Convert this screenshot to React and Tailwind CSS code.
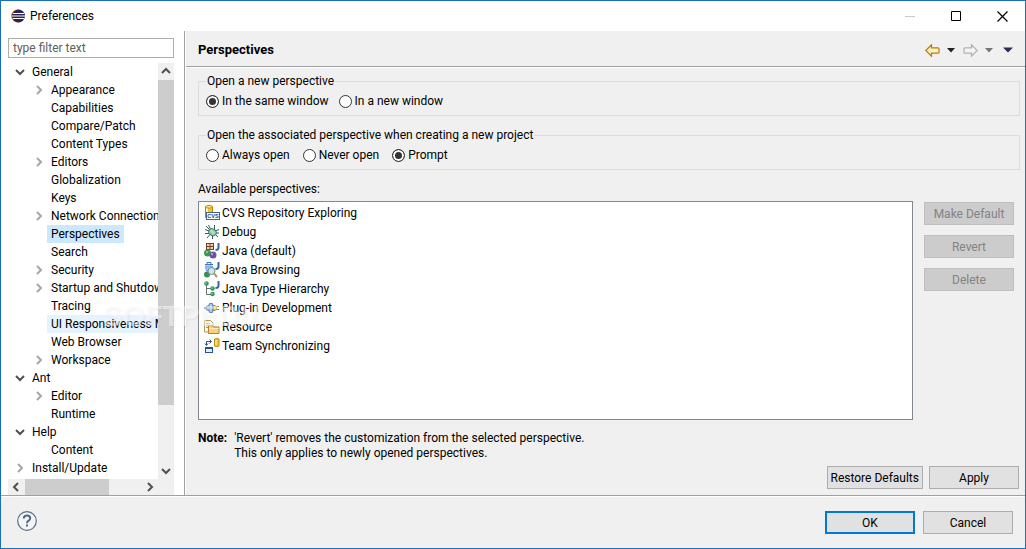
import { useState } from "react";

const tree = [
  { label: "General", level: 0, state: "open" },
  { label: "Appearance", level: 1, state: "closed" },
  { label: "Capabilities", level: 1 },
  { label: "Compare/Patch", level: 1 },
  { label: "Content Types", level: 1 },
  { label: "Editors", level: 1, state: "closed" },
  { label: "Globalization", level: 1 },
  { label: "Keys", level: 1 },
  { label: "Network Connections", level: 1, state: "closed" },
  { label: "Perspectives", level: 1 },
  { label: "Search", level: 1 },
  { label: "Security", level: 1, state: "closed" },
  { label: "Startup and Shutdown", level: 1, state: "closed" },
  { label: "Tracing", level: 1 },
  { label: "UI Responsiveness Monitoring", level: 1, hot: true },
  { label: "Web Browser", level: 1 },
  { label: "Workspace", level: 1, state: "closed" },
  { label: "Ant", level: 0, state: "open" },
  { label: "Editor", level: 1, state: "closed" },
  { label: "Runtime", level: 1 },
  { label: "Help", level: 0, state: "open" },
  { label: "Content", level: 1 },
  { label: "Install/Update", level: 0, state: "closed" },
];

function Icon({ children }) {
  return (
    <svg className="h-4 w-4 shrink-0" viewBox="0 0 16 16" fill="none" aria-hidden="true">
      {children}
    </svg>
  );
}

function JavaJ() {
  return <path d="M14.5 0v4.5q0 2.5-3 2.5" stroke="#35699f" strokeWidth="2" />;
}

const perspectives = [
  {
    name: "CVS Repository Exploring",
    icon: (
      <Icon>
        <path d="M1.5 1.5v11h7v-11z" fill="#f4c53c" stroke="#b8860b" />
        <path d="M3 3v9" stroke="#fff3b0" strokeWidth="2" />
        <ellipse cx="5" cy="1.8" rx="3.5" ry="1.3" fill="#ffe88a" stroke="#c08a10" />
        <rect x="2.5" y="7.5" width="13" height="7" fill="#fff" stroke="#4a628c" />
        <text x="3.2" y="13.2" fontSize="5.6" fontWeight="bold" fontFamily="Liberation Sans, sans-serif" fill="#1c3f86">CVS</text>
      </Icon>
    ),
  },
  {
    name: "Debug",
    icon: (
      <Icon>
        <path d="M4.5 1l2 4M10.5 1v4M1 5.5l4 1.5M1 9.5h4M3 14l3-3.5M8.5 15v-4M14 13l-3-3M11 7l4-1.5M11 9h4M2 2l4 4" stroke="#2f6060" />
        <ellipse cx="8.5" cy="8.2" rx="4" ry="3.3" transform="rotate(35 8.5 8.2)" fill="#9ccfae" stroke="#33705f" />
        <path d="M7 6.5l3 3" stroke="#def3df" />
      </Icon>
    ),
  },
  {
    name: "Java (default)",
    icon: (
      <Icon>
        <rect x="2.5" y=".5" width="7" height="6" fill="#efd2a5" stroke="#74402a" />
        <path d="M6 .5v6M2.5 3.5h7" stroke="#74402a" />
        <circle cx="3.5" cy="10" r="3.5" fill="#3f9554" />
        <circle cx="3" cy="9" r="1" fill="#9ad5a5" />
        <circle cx="9" cy="12" r="3.5" fill="#6655a0" />
        <circle cx="8" cy="11" r="1.2" fill="#aaa0d0" />
        <JavaJ />
      </Icon>
    ),
  },
  {
    name: "Java Browsing",
    icon: (
      <Icon>
        <path d="M1 2.5h8M3 2V.5h4V2" stroke="#3c74bd" />
        <path d="M1.5 4l1 5h5l1-5z" fill="#9bc2f0" stroke="#6f9fdc" />
        <circle cx="3" cy="12.5" r="3" fill="#398e50" />
        <circle cx="7.5" cy="9" r="3.5" fill="#cbe7df" stroke="#718995" />
        <path d="M10 11.5l3 3.5" stroke="#b6985b" strokeWidth="2" />
        <JavaJ />
      </Icon>
    ),
  },
  {
    name: "Java Type Hierarchy",
    icon: (
      <Icon>
        <path d="M2.5 3v10.5h5M2.5 7.5h5" stroke="#66716d" />
        <circle cx="2.5" cy="2.5" r="2.3" fill="#379660" />
        <circle cx="8.5" cy="7.5" r="2.3" fill="#379660" />
        <circle cx="8.5" cy="13" r="2.3" fill="#379660" />
        <circle cx="2" cy="2" r=".8" fill="#9ad9b1" />
        <circle cx="8" cy="7" r=".8" fill="#9ad9b1" />
        <circle cx="8" cy="12.5" r=".8" fill="#9ad9b1" />
        <JavaJ />
      </Icon>
    ),
  },
  {
    name: "Plug-in Development",
    icon: (
      <Icon>
        <path d="M0 8h3" stroke="#4d78b4" strokeWidth="2" />
        <path d="M2.5 6h2l1-2.500h3v9h-3l-1-2.500h-2z" fill="#8eb1df" stroke="#6189bf" />
        <path d="M7 4v8" stroke="#d0e0f5" />
        <path d="M9.5 5l3 1.5v3l-3 1.5z" fill="#f5cf66" stroke="#b98b2e" />
        <path d="M12 6.5h3M12 9.5h3" stroke="#ad7d2b" />
      </Icon>
    ),
  },
  {
    name: "Resource",
    icon: (
      <Icon>
        <path d="M.5 1.5h6l2.5 2.5v9H.5z" fill="#fdf8e7" stroke="#b69653" />
        <path d="M2 4.5h4M2 6.5h4M2 8.5h3" stroke="#789bc9" />
        <path d="M4.5 14.5v-8h4l1 1.5h5.5v6.5z" fill="#f8d27b" stroke="#b8812d" />
        <path d="M5.5 9.5h9" stroke="#fff0bd" />
      </Icon>
    ),
  },
  {
    name: "Team Synchronizing",
    icon: (
      <Icon>
        <path d="M2.5 7V3.5H7M1 5.5l1.5 2L4 5.5M5.5 1.5l2 2-2 2" stroke="#28518e" />
        <rect x="1.5" y="9.5" width="7" height="5" fill="#dff0ff" stroke="#28518e" />
        <path d="M1 10h8" stroke="#28518e" strokeWidth="2" />
        <path d="M10.5 1q2.25-1 4.5 0v7q-2.25 1-4.5 0z" fill="#f6c832" stroke="#b98a11" />
        <path d="M12 2v5" stroke="#fff2a4" />
      </Icon>
    ),
  },
];

function Chevron({ dir, className }) {
  const paths = {
    down: "M1 3l4 4 4-4",
    up: "M1 7l4-4 4 4",
    right: "M3 1l4 4-4 4",
    left: "M7 1L3 5l4 4",
  };
  return (
    <svg className={`h-[10px] w-[10px] shrink-0 ${className}`} viewBox="0 0 10 10" fill="none" aria-hidden="true">
      <path d={paths[dir]} stroke="currentColor" strokeWidth="2" />
    </svg>
  );
}

function ScrollButton({ dir }) {
  return (
    <button type="button" aria-label={`Scroll ${dir}`} className="flex h-4 w-4 shrink-0 items-center justify-center text-[#505050]">
      <Chevron dir={dir} className="" />
    </button>
  );
}

function Button({ children, primary, disabled }) {
  let look = "border border-[#adadad] bg-[#e1e1e1]";
  if (primary) look = "border-2 border-[#0078d7] bg-[#e1e1e1]";
  if (disabled) look = "border border-[#bfbfbf] bg-[#cccccc] text-[#838383]";
  return (
    <button type="button" disabled={disabled} className={`flex h-[23px] min-w-[90px] items-center justify-center whitespace-nowrap px-[3px] ${look}`}>
      {children}
    </button>
  );
}

function RadioGroup({ title, name, options, initial, gap }) {
  const [value, setValue] = useState(initial);
  return (
    <fieldset className="mr-[5px] border border-[#dcdcdc] px-[7px] pb-[6px] pt-1">
      <legend className="px-px">{title}</legend>
      <div className={`flex ${gap}`}>
        {options.map((o) => (
          <label key={o} className="flex items-center gap-[3px]">
            <input
              type="radio"
              name={name}
              checked={value === o}
              onChange={() => setValue(o)}
              className="h-[13px] w-[13px] appearance-none rounded-full border border-[#333] bg-white checked:bg-[#333] checked:shadow-[inset_0_0_0_2px_white]"
            />
            {o}
          </label>
        ))}
      </div>
    </fieldset>
  );
}

function TitleBar() {
  return (
    <header className="flex h-[30px] items-center bg-white pl-[10px]">
      <svg className="h-[14px] w-[14px]" viewBox="0 0 14 14" aria-hidden="true">
        <circle cx="6.5" cy="7" r="6.5" fill="#f7941e" />
        <circle cx="7.5" cy="7" r="6.5" fill="#2c2255" />
        <path d="M2 4.5h11M1 7h13M2 9.5h11" stroke="#fff" />
      </svg>
      <h1 className="ml-[5px] flex-1">Preferences</h1>
      <div className="flex">
        <button type="button" aria-label="Minimize" disabled className="flex h-[29px] w-[45px] items-center justify-center">
          <svg className="h-[11px] w-[11px]" viewBox="0 0 11 11"><path d="M0 5.5h10" stroke="#c8c8c8" /></svg>
        </button>
        <button type="button" aria-label="Maximize" className="flex h-[29px] w-[46px] items-center justify-center">
          <svg className="h-[11px] w-[11px]" viewBox="0 0 11 11" fill="none"><path d="M.5.5h9v9h-9z" stroke="#000" /></svg>
        </button>
        <button type="button" aria-label="Close" className="flex h-[29px] w-[46px] items-center justify-center">
          <svg className="h-[11px] w-[11px]" viewBox="0 0 11 11"><path d="M.5.5l10 10M10.5.5l-10 10" stroke="#000" strokeWidth="1.2" /></svg>
        </button>
      </div>
    </header>
  );
}

function Sidebar() {
  const [selected, setSelected] = useState("Perspectives");
  return (
    <aside className="flex w-[183px] shrink-0 flex-col bg-white pl-[7px] pr-[10px] pt-[7px]">
      <input
        type="text"
        aria-label="Filter preferences"
        placeholder="type filter text"
        className="h-5 w-full border border-[#adadad] px-1 placeholder:text-[#606060]"
      />
      <div className="mt-[5px] grid flex-1 grid-cols-[1fr_16px] grid-rows-[1fr_16px] bg-[#f0f0f0]">
        <ul className="overflow-hidden bg-white">
          {tree.map((n) => (
            <li key={n.label} className={`flex h-[18px] items-center ${n.level ? "pl-[26px]" : "pl-[7px]"}`}>
              {n.state ? (
                <Chevron dir={n.state === "open" ? "down" : "right"} className={n.state === "open" ? "text-[#505050]" : "text-[#a6a6a6]"} />
              ) : (
                <span className="w-[10px] shrink-0" />
              )}
              <button
                type="button"
                onClick={() => setSelected(n.label)}
                className={`ml-[3px] h-[18px] whitespace-nowrap px-1 ${selected === n.label ? "bg-[#cce8ff]" : n.hot ? "bg-[#e5f3ff]" : ""}`}
              >
                {n.label}
              </button>
            </li>
          ))}
        </ul>
        <div className="flex flex-col">
          <ScrollButton dir="up" />
          <div className="mb-auto mt-px h-[325px] bg-[#cdcdcd]" />
          <ScrollButton dir="down" />
        </div>
        <div className="flex">
          <ScrollButton dir="left" />
          <div className="ml-px mr-auto h-4 w-[84px] bg-[#cdcdcd]" />
          <ScrollButton dir="right" />
        </div>
      </div>
    </aside>
  );
}

function Caret({ className }) {
  return (
    <svg className={`h-[5px] w-2 ${className}`} viewBox="0 0 8 5" aria-hidden="true">
      <path d="M0 0h8L4 4.5z" fill="currentColor" />
    </svg>
  );
}

function NavArrow({ back }) {
  return (
    <svg className="h-[13px] w-[15px]" viewBox="0 0 15 13" aria-hidden="true">
      {back ? (
        <path d="M.8 6.5L6.5.8v3H13q1 0 1 1v3.4q0 1-1 1H6.5v3z" fill="#fff3bf" stroke="#b87b10" strokeWidth="1.2" />
      ) : (
        <path d="M14.2 6.5L8.5.8v3H2q-1 0-1 1v3.4q0 1 1 1h6.500v3z" fill="#f4f4f4" stroke="#b0b0b0" strokeWidth="1.2" />
      )}
    </svg>
  );
}

function Page() {
  return (
    <main className="flex min-w-0 flex-1 flex-col border-l border-white">
      <div className="flex h-9 items-center border-b border-[#a0a0a0] pl-3 pr-3 pt-[3px]">
        <h2 className="flex-1 text-[13px] font-bold">Perspectives</h2>
        <div className="flex items-center">
          <button type="button" aria-label="Back"><NavArrow back /></button>
          <button type="button" aria-label="Back history" className="ml-[7px]"><Caret className="text-[#222]" /></button>
          <button type="button" aria-label="Forward" className="ml-2"><NavArrow /></button>
          <button type="button" aria-label="Forward history" className="ml-[7px]"><Caret className="text-[#77757c]" /></button>
          <button type="button" aria-label="Menu" className="ml-[10px]">
            <svg className="h-[6px] w-[10px]" viewBox="0 0 10 6"><path d="M0 .5h10L5 5.5z" fill="#34205c" /></svg>
          </button>
        </div>
      </div>
      <div className="flex flex-1 flex-col border-t border-white pl-3 pt-[5px]">
        <RadioGroup
          title="Open a new perspective"
          name="open-mode"
          initial="In the same window"
          options={["In the same window", "In a new window"]}
          gap="gap-[10px]"
        />
        <div className="h-[11px]" />
        <RadioGroup
          title="Open the associated perspective when creating a new project"
          name="associated"
          initial="Prompt"
          options={["Always open", "Never open", "Prompt"]}
          gap="gap-[13px]"
        />
        <p id="available" className="mb-1 mt-[11px]">Available perspectives:</p>
        <div className="flex flex-1 gap-[11px] pr-[11px]">
          <ul aria-labelledby="available" className="flex-1 border border-[#828790] bg-white pl-[5px] pt-px">
            {perspectives.map((p) => (
              <li key={p.name} className="flex h-[19px] items-center gap-[2px]">
                {p.icon}
                {p.name}
              </li>
            ))}
          </ul>
          <div className="flex flex-col gap-[10px] pt-px">
            <Button disabled>Make Default</Button>
            <Button disabled>Revert</Button>
            <Button disabled>Delete</Button>
          </div>
        </div>
        <div className="mt-[11px] flex gap-[7px] leading-[15px]">
          <strong>Note:</strong>
          <p>
            'Revert' removes the customization from the selected perspective.
            <br />
            This only applies to newly opened perspectives.
          </p>
        </div>
        <div className="mb-[6px] mt-[5px] flex justify-end gap-[6px] pr-[6px]">
          <Button>Restore Defaults</Button>
          <Button>Apply</Button>
        </div>
      </div>
    </main>
  );
}

export default function App() {
  return (
    <div className="relative flex min-h-screen flex-col border border-[#1a6fb8] bg-[#f0f0f0] font-['Roboto',sans-serif] text-[12px] leading-4 text-black">
      <TitleBar />
      <div className="flex flex-1 border-b border-[#a0a0a0]">
        <Sidebar />
        <div className="w-px bg-[#a0a0a0]" />
        <Page />
      </div>
      <footer className="flex h-[52px] items-center border-t border-white pl-4 pr-3">
        <button type="button" aria-label="Help" className="mb-[3px]">
          <svg className="h-5 w-5" viewBox="0 0 20 20" fill="none">
            <circle cx="10" cy="10" r="9.3" fill="#f3f5f8" stroke="#5a6d8c" strokeWidth="1.2" />
            <path d="M6.8 7.5q0-3 3.2-3t3.2 2.7q0 1.5-1.6 2.5t-1.6 2.5" stroke="#536886" strokeWidth="2" />
            <path d="M9 13.5h2v2H9z" fill="#536886" />
          </svg>
        </button>
        <div className="ml-auto flex gap-2">
          <Button primary>OK</Button>
          <Button>Cancel</Button>
        </div>
      </footer>
      {/* faint stamp laid over the window */}
      <div className="pointer-events-none absolute left-[102px] top-[299px] font-['Liberation_Sans',sans-serif] text-[29px] font-bold leading-[32px] text-white/50 [text-shadow:1px_1px_2px_rgba(0,0,0,0.06)]">
        SOFTPEDIA
      </div>
    </div>
  );
}
